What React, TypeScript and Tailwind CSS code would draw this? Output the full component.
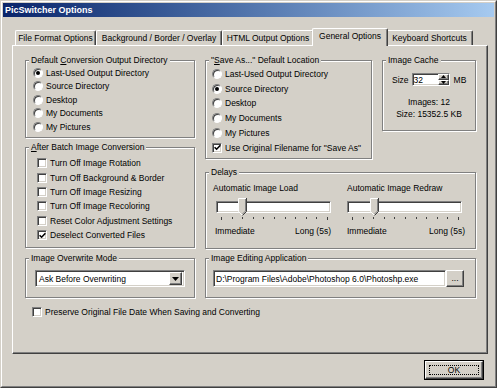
import React from "react";

const sunken =
  "bg-white border border-t-[#808080] border-l-[#808080] border-r-white border-b-white shadow-[inset_1px_1px_0_#404040,inset_-1px_-1px_0_#d4d0c8]";
const raised =
  "bg-[#d4d0c8] border border-t-white border-l-white border-r-[#404040] border-b-[#404040] shadow-[inset_-1px_-1px_0_#808080]";

function Group({
  title,
  className = "",
  children,
}: {
  title: React.ReactNode;
  className?: string;
  children?: React.ReactNode;
}) {
  return (
    <div
      className={`relative border border-[#808080] shadow-[inset_1px_1px_0_#fff,1px_1px_0_#fff] ${className}`}
    >
      <span className="absolute -top-[6px] left-[3px] bg-[#d4d0c8] px-[2px] leading-[10px]">
        {title}
      </span>
      {children}
    </div>
  );
}

function Radio({ label, checked = false, className = "" }: { label: string; checked?: boolean; className?: string }) {
  return (
    <div className={`flex items-center ${className}`}>
      <span className="flex h-[10px] w-[10px] shrink-0 items-center justify-center rounded-full border border-t-[#808080] border-l-[#808080] border-r-white border-b-white bg-white shadow-[inset_1px_1px_0_#404040]">
        {checked && <span className="h-[4px] w-[4px] rounded-full bg-black" />}
      </span>
      <span className="ml-[3px] whitespace-nowrap">{label}</span>
    </div>
  );
}

function Check({ label, checked = false, className = "" }: { label: string; checked?: boolean; className?: string }) {
  return (
    <div className={`flex items-center ${className}`}>
      <span className={`flex h-[10px] w-[10px] shrink-0 items-center justify-center ${sunken}`}>
        {checked && (
          <svg width="7" height="7" viewBox="0 0 7 7">
            <path d="M0.6 3.2 L2.6 5.2 L6.4 1.2" stroke="#000" strokeWidth="1.6" fill="none" />
          </svg>
        )}
      </span>
      <span className="ml-[3px] whitespace-nowrap">{label}</span>
    </div>
  );
}

function Thumb({ className }: { className: string }) {
  return (
    <svg className={`absolute ${className}`} width="9" height="18" viewBox="0 0 9 18">
      <polygon points="0,0 9,0 9,13.5 4.5,18 0,13.5" fill="#d4d0c8" />
      <polyline points="0.5,13.5 0.5,0.5 8,0.5" stroke="#fff" fill="none" />
      <polyline points="0.5,13.5 4.5,17.5" stroke="#fff" fill="none" />
      <polyline points="8.5,0 8.5,13.5 4.5,17.5" stroke="#404040" fill="none" />
      <polyline points="7.5,1 7.5,13 4.5,16" stroke="#808080" fill="none" />
    </svg>
  );
}

function Slider({
  label,
  trackClass,
  thumbClass,
  tickClass,
  immClass,
}: {
  label: string;
  trackClass: string;
  thumbClass: string;
  tickClass: string;
  immClass: string;
}) {
  const ticks = Array.from({ length: 11 }, (_, i) => i);
  return (
    <div className="flex w-[118px] flex-col">
      <span className="h-[10px] whitespace-nowrap">{label}</span>
      <div className={`relative mt-[8px] h-[12px] w-[115px] ${sunken} ${trackClass}`}>
        <Thumb className={thumbClass} />
      </div>
      <div className={`mt-[4px] flex h-[3px] w-[107px] items-start justify-between ${tickClass}`}>
        {ticks.map((t) => (
          <span
            key={t}
            className={`w-px bg-[#404040] ${t === 0 || t === 10 ? "h-[3px]" : "h-[2px]"}`}
          />
        ))}
      </div>
      <div className="mt-[6px] flex h-[10px] justify-between">
        <span className={immClass}>Immediate</span>
        <span>Long (5s)</span>
      </div>
    </div>
  );
}

const tabs = [
  { label: "File Format Options", w: "w-[81px]" },
  { label: "Background / Border / Overlay", w: "w-[126px]" },
  { label: "HTML Output Options", w: "w-[92px]" },
  { label: "General Options", w: "w-[76px]", active: true },
  { label: "Keyboard Shortcuts", w: "w-[87px]" },
];

export default function App() {
  return (
    <div className="h-[388px] w-[497px] border border-t-[#d4d0c8] border-l-[#d4d0c8] border-r-[#404040] border-b-[#404040] bg-[#d4d0c8] font-['Liberation_Sans',Arial,sans-serif] text-[8.5px] leading-[10px] text-black">
      <div className="flex h-full flex-col border border-t-white border-l-white border-r-[#808080] border-b-[#808080] p-px">
        {/* title bar */}
        <div className="flex h-[14px] items-center bg-linear-to-r from-[#0a246a] to-[#a6caf0] pl-[2px] text-[9px] font-bold text-white">
          PicSwitcher Options
        </div>

        <div className="flex flex-col pl-[9px] pr-[10px]">
          {/* tabs */}
          <div className="relative z-10 mt-[11px] -mb-px ml-[3px] flex h-[18px] items-end">
            {tabs.map((t) => (
              <div
                key={t.label}
                className={`flex items-center justify-center whitespace-nowrap rounded-t-[2px] border-t border-l border-r border-t-white border-l-white border-r-[#404040] shadow-[inset_-1px_0_0_#808080] ${t.w} ${
                  t.active ? "relative z-10 -mx-[2px] h-[18px] bg-[#d4d0c8] pb-[3px]" : "mb-px h-[15px]"
                }`}
              >
                {t.label}
              </div>
            ))}
          </div>

          {/* panel */}
          <div className="flex h-[309px] w-[476px] flex-col border border-t-white border-l-white border-r-[#404040] border-b-[#404040] pt-[14px] pl-[12px] shadow-[inset_-1px_-1px_0_#808080]">
            <div className="flex gap-[10px]">
              {/* left column */}
              <div className="flex w-[170px] flex-col">
                <Group
                  className="h-[78px] pt-[5px] pl-[7px]"
                  title={
                    <>
                      Default <u>C</u>onversion Output Directory
                    </>
                  }
                >
                  <Radio className="h-[13.5px]" label="Last-Used Output Directory" checked />
                  <Radio className="h-[13.5px]" label="Source Directory" />
                  <Radio className="h-[13.5px]" label="Desktop" />
                  <Radio className="h-[13.5px]" label="My Documents" />
                  <Radio className="h-[13.5px]" label="My Pictures" />
                </Group>
                <Group
                  className="mt-[9px] h-[101px] pt-[8px] pl-[11px]"
                  title={
                    <>
                      <u>A</u>fter Batch Image Conversion
                    </>
                  }
                >
                  <Check className="h-[14.4px]" label="Turn Off Image Rotation" />
                  <Check className="h-[14.4px]" label="Turn Off Background & Border" />
                  <Check className="h-[14.4px]" label="Turn Off Image Resizing" />
                  <Check className="h-[14.4px]" label="Turn Off Image Recoloring" />
                  <Check className="h-[14.4px]" label="Reset Color Adjustment Settings" />
                  <Check className="h-[14.4px]" label="Deselect Converted Files" checked />
                </Group>
              </div>

              {/* right column */}
              <div className="flex w-[271px] flex-col">
                <div className="flex gap-[10px]">
                  <Group
                    className="h-[99px] w-[167px] pt-[5.5px] pl-[6px]"
                    title={
                      <>
                        "<u>S</u>ave As..." Default Location
                      </>
                    }
                  >
                    <Radio className="h-[14.8px]" label="Last-Used Output Directory" />
                    <Radio className="h-[14.8px]" label="Source Directory" checked />
                    <Radio className="h-[14.8px]" label="Desktop" />
                    <Radio className="h-[14.8px]" label="My Documents" />
                    <Radio className="h-[14.8px]" label="My Pictures" />
                    <Check className="h-[14.8px]" label='Use Original Filename for "Save As"' checked />
                  </Group>
                  <Group className="h-[71px] w-[94px] pt-[12px]" title="Image Cache">
                    <div className="flex h-[13px] items-center pl-[9px]">
                      <span>Size</span>
                      <div className={`ml-[3px] flex h-[13px] w-[38px] items-center ${sunken}`}>
                        <span className="flex-1 pl-[1px]">32</span>
                        <div className="flex h-full w-[11px] flex-col">
                          <span className={`flex h-1/2 items-center justify-center ${raised}`}>
                            <svg width="5" height="3" viewBox="0 0 5 3">
                              <polygon points="2.5,0 5,3 0,3" fill="#000" />
                            </svg>
                          </span>
                          <span className={`flex h-1/2 items-center justify-center ${raised}`}>
                            <svg width="5" height="3" viewBox="0 0 5 3">
                              <polygon points="0,0 5,0 2.5,3" fill="#000" />
                            </svg>
                          </span>
                        </div>
                      </div>
                      <span className="ml-[4px]">MB</span>
                    </div>
                    <div className="mt-[10px] text-center leading-[12px]">
                      <div>Images: 12</div>
                      <div>Size: 15352.5 KB</div>
                    </div>
                  </Group>
                </div>
                <Group className="mt-[13px] flex h-[77px] gap-[16px] pt-[10px] pl-[7px]" title="Delays">
                  <Slider
                    label="Automatic Image Load"
                    trackClass="ml-[3px]"
                    thumbClass="-top-[4px] left-[21px]"
                    tickClass="ml-[8px]"
                    immClass="ml-[2px]"
                  />
                  <Slider
                    label="Automatic Image Redraw"
                    trackClass="ml-0"
                    thumbClass="-top-[4px] left-[22px]"
                    tickClass="ml-[5px]"
                    immClass="ml-0"
                  />
                </Group>
              </div>
            </div>

            {/* second row */}
            <div className="mt-[9px] flex gap-[10px]">
              <Group className="h-[40px] w-[170px] pt-[11px] pl-[9px]" title="Image Overwrite Mode">
                <div className={`flex h-[17px] w-[150px] items-center p-[2px] ${sunken}`}>
                  <span className="flex-1 pl-[1px]">Ask Before Overwriting</span>
                  <span className={`flex h-[13px] w-[13px] items-center justify-center ${raised}`}>
                    <svg width="7" height="4" viewBox="0 0 7 4">
                      <polygon points="0,0 7,0 3.5,4" fill="#000" />
                    </svg>
                  </span>
                </div>
              </Group>
              <Group className="flex h-[40px] w-[271px] pt-[11px] pl-[7px]" title="Image Editing Application">
                <div className={`flex h-[17px] w-[233px] items-center pl-[2px] ${sunken}`}>
                  <span className="whitespace-nowrap">D:\Program Files\Adobe\Photoshop 6.0\Photoshp.exe</span>
                </div>
                <span className={`flex h-[17px] w-[18px] items-center justify-center pb-[2px] ${raised}`}>...</span>
              </Group>
            </div>

            <Check
              className="mt-[9px] ml-[7px] h-[10px]"
              label="Preserve Original File Date When Saving and Converting"
            />
          </div>

          {/* footer */}
          <div className="mt-[6px] flex justify-end">
            <div className="h-[20px] w-[60px] border border-black">
              <div className={`flex h-full w-full p-[3px] ${raised}`}>
                <span className="flex flex-1 items-center justify-center border border-dotted border-black">
                  OK
                </span>
              </div>
            </div>
          </div>
        </div>
      </div>
    </div>
  );
}
